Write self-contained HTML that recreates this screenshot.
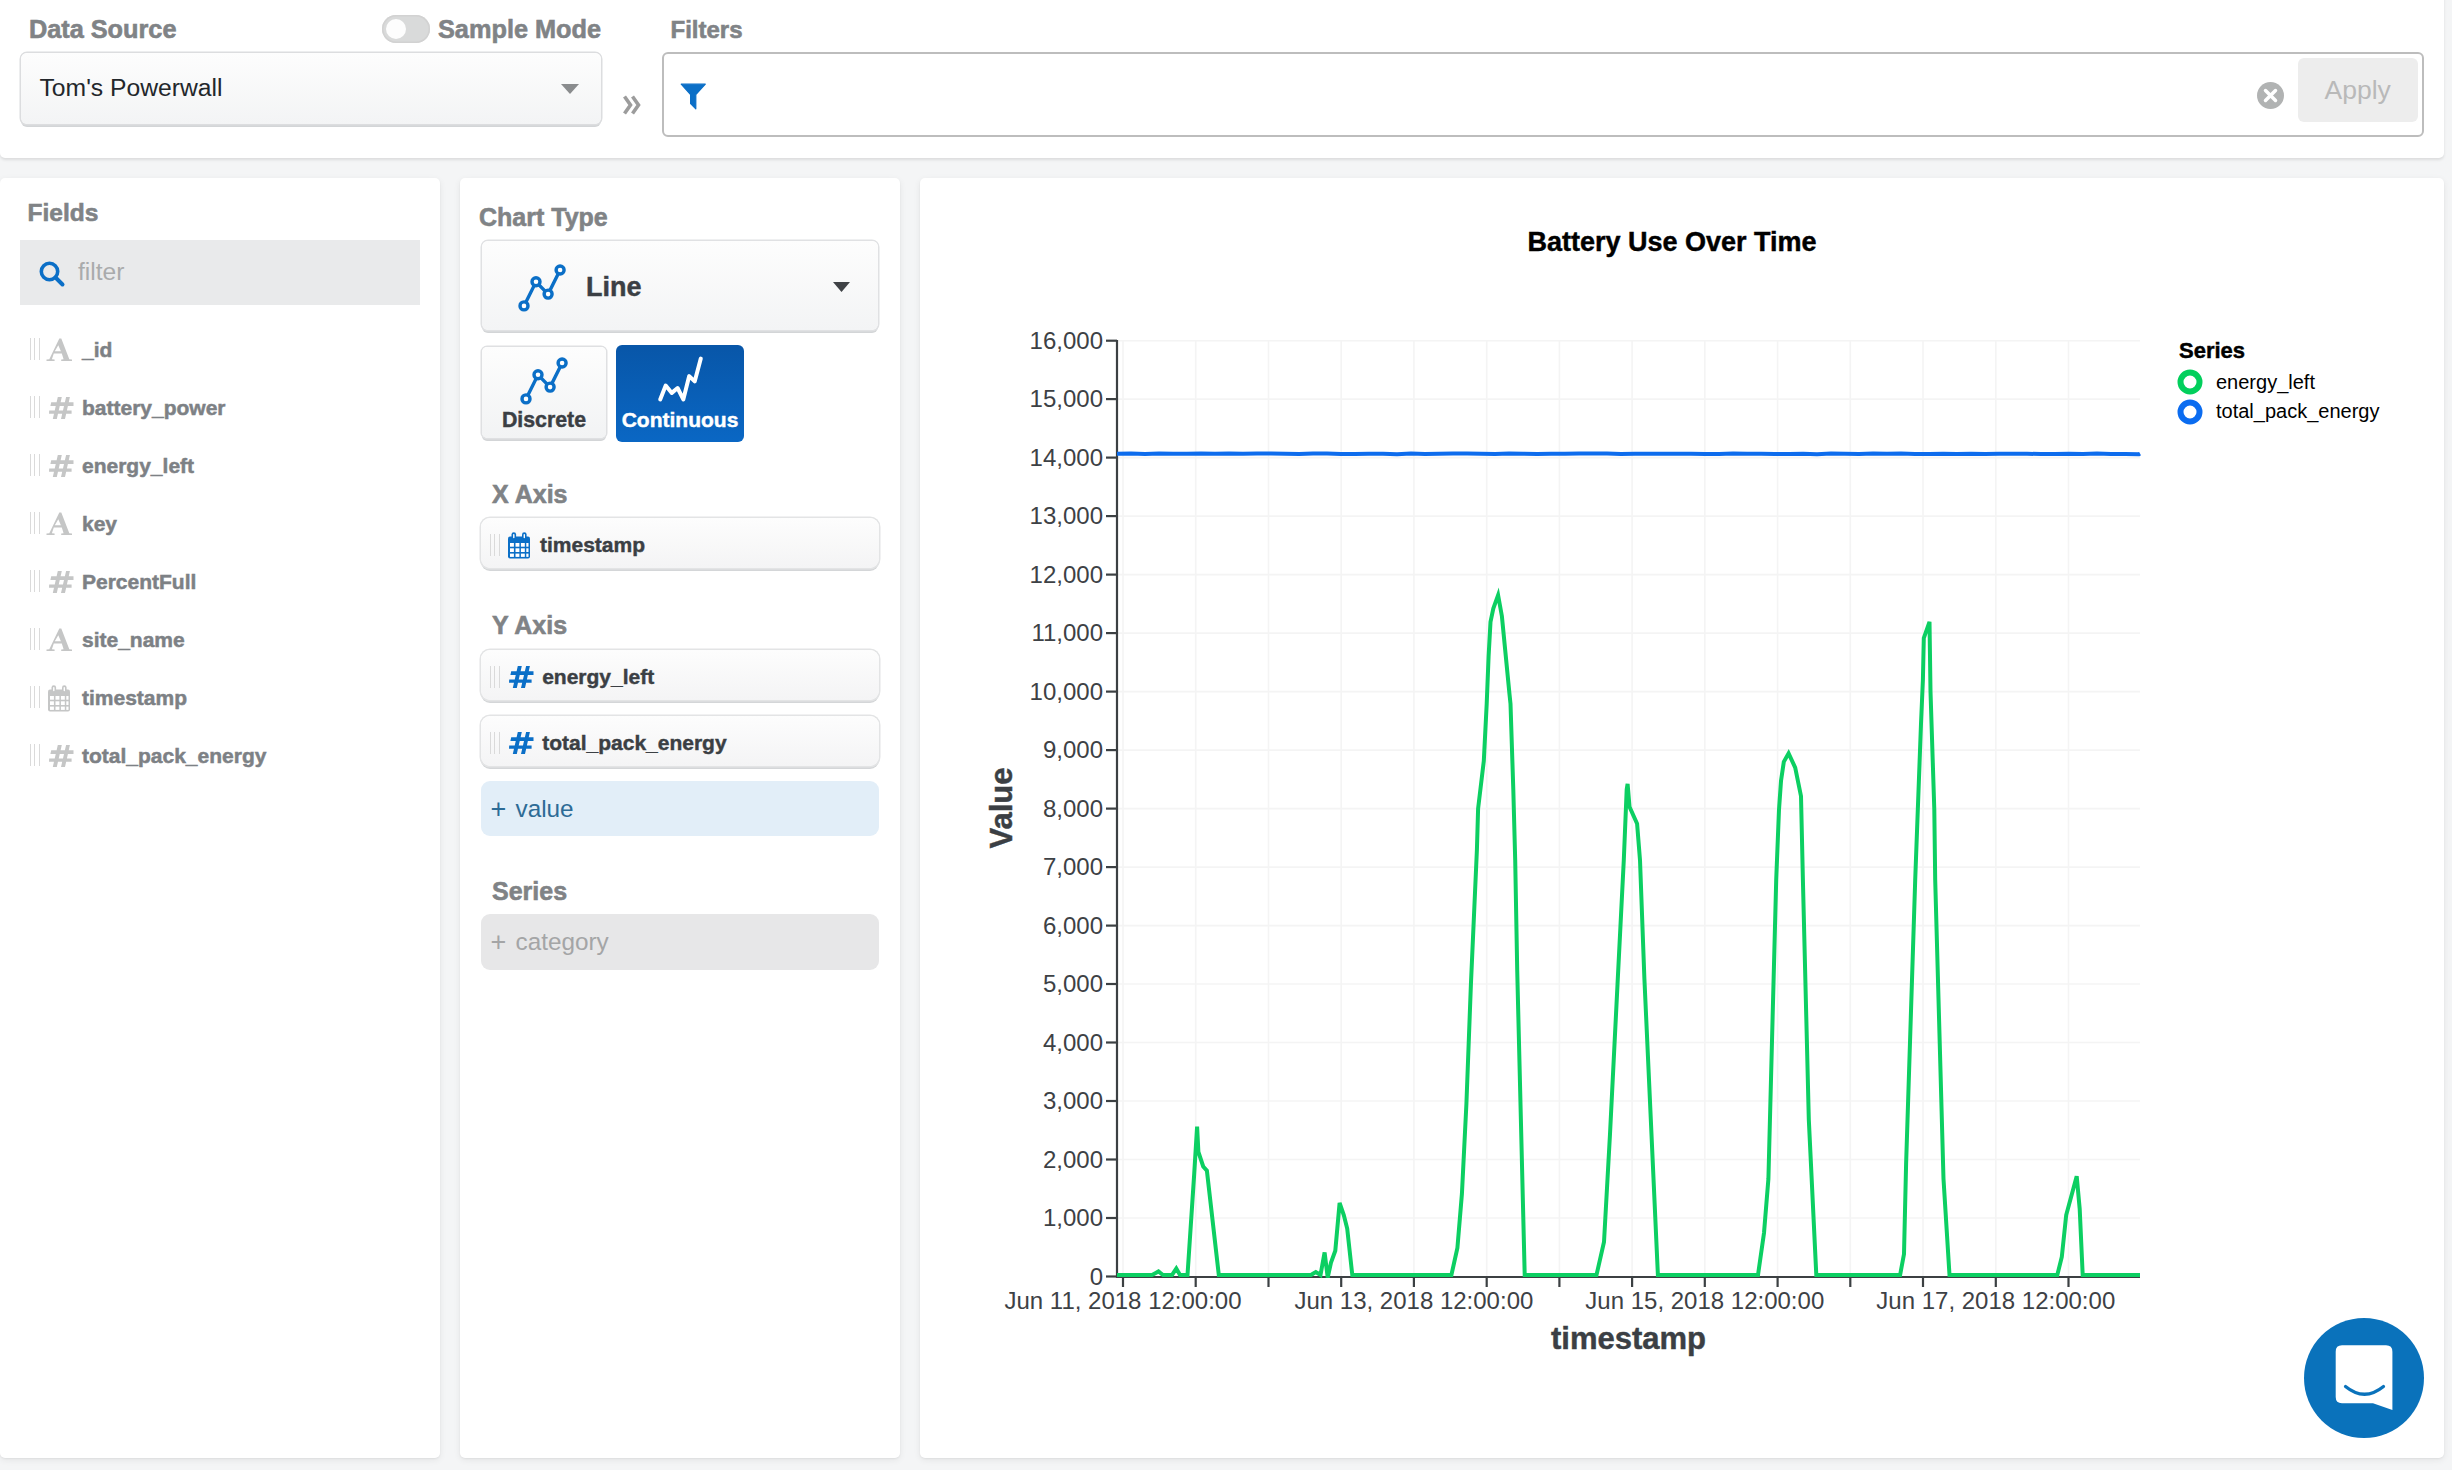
<!DOCTYPE html>
<html><head><meta charset="utf-8">
<style>
html,body{margin:0;padding:0;}
body{width:2452px;height:1470px;overflow:hidden;background:#f4f5f6;font-family:"Liberation Sans",sans-serif;position:relative;}
.a{position:absolute;}
.t{position:absolute;line-height:1;white-space:nowrap;}
.b{font-weight:bold;}
.sb{-webkit-text-stroke:0.45px currentColor;}
.panel{position:absolute;background:#fff;border-radius:5px;box-shadow:0 2px 7px rgba(0,0,0,0.07),0 1px 2px rgba(0,0,0,0.05);}
.lbl{color:#808386;font-weight:bold;font-size:25px;-webkit-text-stroke:0.6px #808386;}
.fld{color:#7d8185;font-weight:bold;font-size:21px;-webkit-text-stroke:0.5px #7d8185;}
.pill{position:absolute;left:481px;width:398px;border-radius:9px;background:linear-gradient(#fdfdfd,#f4f4f5);box-shadow:0 0 0 1.5px #e3e4e5, 0 3px 0 #d4d6d8;}
.hdl{position:absolute;width:10px;height:22px;border-left:1.5px solid #dadada;border-right:1.5px solid #dadada;box-sizing:border-box;}
.hdl:after{content:"";position:absolute;left:2.8px;top:0;width:1.5px;height:22px;background:#dadada;}
svg text{font-family:"Liberation Sans",sans-serif;}
.g{stroke:#f4f4f4;stroke-width:1.6;}
.ax{stroke:#3c4043;stroke-width:2.2;fill:none;}
.tk{stroke:#3c4043;stroke-width:2.2;}
.yl{font-size:24px;fill:#3d4145;text-anchor:end;}
.xl{font-size:24px;fill:#3d4145;text-anchor:middle;}
.bl{fill:none;stroke:#0d6ced;stroke-width:4;stroke-linejoin:round;}
.gl{fill:none;stroke:#0ccf62;stroke-width:4;stroke-linejoin:miter;stroke-miterlimit:4;}
</style></head>
<body>
<!-- header -->
<div class="panel" style="left:0px;top:-8px;width:2444px;height:166px;box-shadow:0 2px 3px rgba(0,0,0,0.1);"></div>
<div class="t lbl" style="left:28.9px;top:17.4px;font-size:25.3px;">Data Source</div>
<div class="a" style="left:382px;top:15px;width:48px;height:28px;border-radius:14px;background:#d9dada;box-shadow:inset 0 0 0 1.5px #d2d2d2;"></div>
<div class="a" style="left:386px;top:19px;width:20px;height:20px;border-radius:10px;background:#fdfdfd;"></div>
<div class="t lbl" style="left:438px;top:17.3px;font-size:25.3px;">Sample Mode</div>
<div class="t lbl" style="left:670.5px;top:18px;font-size:24px;">Filters</div>
<div class="a" style="left:21px;top:53px;width:580px;height:71px;border-radius:6px;background:linear-gradient(#fdfdfd,#f3f4f5);box-shadow:0 0 0 1.5px #dcdddf, 0 3px 0 #d3d5d7;"></div>
<div class="t" style="left:39.5px;top:75.8px;font-size:24.7px;color:#23272b;">Tom's Powerwall</div>
<svg class="a" style="left:558px;top:82px" width="24" height="14"><path d="M3,2 H21 L12,12 Z" fill="#8a8c8e"/></svg>
<svg class="a" style="left:621px;top:94px" width="22" height="22"><path d="M3.5,2.5 L9.5,11 L3.5,19.5 M11.5,2.5 L17.5,11 L11.5,19.5" stroke="#9c9c9c" stroke-width="3.6" fill="none"/></svg>
<div class="a" style="left:662px;top:52px;width:1758px;height:81px;border:2px solid #bdbdbd;border-radius:6px;background:#fff;"></div>
<svg class="a" style="left:679.5px;top:83px" width="28" height="28"><path d="M1.2,1.2 H25.3 L15.8,11.5 V25.8 L10.6,20.6 V11.5 Z" fill="#0b6fc7" stroke="#0b6fc7" stroke-width="1.2" stroke-linejoin="round"/></svg>
<svg class="a" style="left:2256px;top:81px" width="30" height="30"><circle cx="14.5" cy="14.5" r="13.5" fill="#b1b3b3"/><path d="M9.5,9.5 L19.5,19.5 M19.5,9.5 L9.5,19.5" stroke="#fff" stroke-width="3.5" stroke-linecap="round"/></svg>
<div class="a" style="left:2298px;top:58px;width:120px;height:64px;border-radius:6px;background:#ededed;"></div>
<div class="t" style="left:2324.5px;top:76.6px;font-size:26.5px;color:#b9b9b9;">Apply</div>

<!-- left panel -->
<div class="panel" style="left:0px;top:178px;width:440px;height:1280px;"></div>
<div class="t lbl" style="left:27.5px;top:200.7px;font-size:24.5px;">Fields</div>
<div class="a" style="left:20px;top:240px;width:400px;height:65px;background:#e9eaeb;"></div>
<svg class="a" style="left:38px;top:260px" width="28" height="28"><circle cx="11.5" cy="11.5" r="8.2" stroke="#0b6fc7" stroke-width="3.6" fill="none"/><path d="M17.5,17.5 L24.5,24.5" stroke="#0b6fc7" stroke-width="4" stroke-linecap="round"/></svg>
<div class="t" style="left:78px;top:260px;font-size:24.6px;color:#a9abac;">filter</div>
<div class="hdl" style="left:30px;top:338px;"></div>
<svg class="a" style="left:44px;top:336px" width="32" height="28"><path d="M15.3,2.4 L17.3,2.4 L25.3,23.3 L28.0,23.6 L28.0,25.0 L17.2,25.0 L17.2,23.6 L19.6,23.3 L17.8,17.6 L9.8,17.6 L7.9,23.3 L10.6,23.6 L10.6,25.0 L2.5,25.0 L2.5,23.6 L5.3,23.3 Z M14.3,9.2 L16.9,15.2 L10.8,15.2 Z" fill="#c5c6c6" fill-rule="evenodd"/></svg>
<div class="t fld" style="left:82px;top:339.2px;">_id</div>
<div class="hdl" style="left:30px;top:396px;"></div>
<svg class="a" style="left:48.5px;top:396.9px" width="25" height="22"><path d="M8.8,0 H12.8 L7.8,22 H3.8 Z M17.1,0 H20.9 L16,22 H12 Z M2.2,5.3 H24.5 V8.9 H1.4 Z M0.2,13.4 H22.6 V16.8 H0 Z" fill="#c5c6c6"/></svg>
<div class="t fld" style="left:82px;top:397.2px;">battery_power</div>
<div class="hdl" style="left:30px;top:454px;"></div>
<svg class="a" style="left:48.5px;top:454.9px" width="25" height="22"><path d="M8.8,0 H12.8 L7.8,22 H3.8 Z M17.1,0 H20.9 L16,22 H12 Z M2.2,5.3 H24.5 V8.9 H1.4 Z M0.2,13.4 H22.6 V16.8 H0 Z" fill="#c5c6c6"/></svg>
<div class="t fld" style="left:82px;top:455.2px;">energy_left</div>
<div class="hdl" style="left:30px;top:512px;"></div>
<svg class="a" style="left:44px;top:510px" width="32" height="28"><path d="M15.3,2.4 L17.3,2.4 L25.3,23.3 L28.0,23.6 L28.0,25.0 L17.2,25.0 L17.2,23.6 L19.6,23.3 L17.8,17.6 L9.8,17.6 L7.9,23.3 L10.6,23.6 L10.6,25.0 L2.5,25.0 L2.5,23.6 L5.3,23.3 Z M14.3,9.2 L16.9,15.2 L10.8,15.2 Z" fill="#c5c6c6" fill-rule="evenodd"/></svg>
<div class="t fld" style="left:82px;top:513.2px;">key</div>
<div class="hdl" style="left:30px;top:570px;"></div>
<svg class="a" style="left:48.5px;top:570.9px" width="25" height="22"><path d="M8.8,0 H12.8 L7.8,22 H3.8 Z M17.1,0 H20.9 L16,22 H12 Z M2.2,5.3 H24.5 V8.9 H1.4 Z M0.2,13.4 H22.6 V16.8 H0 Z" fill="#c5c6c6"/></svg>
<div class="t fld" style="left:82px;top:571.2px;">PercentFull</div>
<div class="hdl" style="left:30px;top:628px;"></div>
<svg class="a" style="left:44px;top:626px" width="32" height="28"><path d="M15.3,2.4 L17.3,2.4 L25.3,23.3 L28.0,23.6 L28.0,25.0 L17.2,25.0 L17.2,23.6 L19.6,23.3 L17.8,17.6 L9.8,17.6 L7.9,23.3 L10.6,23.6 L10.6,25.0 L2.5,25.0 L2.5,23.6 L5.3,23.3 Z M14.3,9.2 L16.9,15.2 L10.8,15.2 Z" fill="#c5c6c6" fill-rule="evenodd"/></svg>
<div class="t fld" style="left:82px;top:629.2px;">site_name</div>
<div class="hdl" style="left:30px;top:686px;"></div>
<svg class="a" style="left:47px;top:684.5px" width="26" height="28" viewBox="0 0 26 28"><path d="M1,6.5 Q1,4.5 3,4.5 H21 Q23,4.5 23,6.5 V24.5 Q23,26.5 21,26.5 H3 Q1,26.5 1,24.5 Z" fill="#c5c6c6"/><g fill="#fff"><rect x="3" y="11" width="3.9" height="3.7"/><rect x="8.5" y="11" width="3.9" height="3.7"/><rect x="13.9" y="11" width="3.9" height="3.7"/><rect x="19.3" y="11" width="2.2" height="3.7"/><rect x="3" y="16.3" width="3.9" height="3.7"/><rect x="8.5" y="16.3" width="3.9" height="3.7"/><rect x="13.9" y="16.3" width="3.9" height="3.7"/><rect x="19.3" y="16.3" width="2.2" height="3.7"/><rect x="3" y="21.6" width="3.9" height="3.3"/><rect x="8.5" y="21.6" width="3.9" height="3.3"/><rect x="13.9" y="21.6" width="3.9" height="3.3"/><rect x="19.3" y="21.6" width="2.2" height="3.3"/></g><g fill="#c5c6c6"><rect x="4.5" y="0.3" width="4.6" height="7" rx="2.3"/><rect x="15" y="0.3" width="4.6" height="7" rx="2.3"/></g><g fill="#fff"><rect x="6.1" y="2" width="1.4" height="4.3" rx="0.7"/><rect x="16.6" y="2" width="1.4" height="4.3" rx="0.7"/></g></svg>
<div class="t fld" style="left:82px;top:687.2px;">timestamp</div>
<div class="hdl" style="left:30px;top:744px;"></div>
<svg class="a" style="left:48.5px;top:744.9px" width="25" height="22"><path d="M8.8,0 H12.8 L7.8,22 H3.8 Z M17.1,0 H20.9 L16,22 H12 Z M2.2,5.3 H24.5 V8.9 H1.4 Z M0.2,13.4 H22.6 V16.8 H0 Z" fill="#c5c6c6"/></svg>
<div class="t fld" style="left:82px;top:745.2px;">total_pack_energy</div>

<!-- middle panel -->
<div class="panel" style="left:460px;top:178px;width:439.5px;height:1280px;"></div>
<div class="t lbl" style="left:479px;top:205.1px;">Chart Type</div>
<div class="a" style="left:482px;top:241px;width:396px;height:89px;border-radius:6px;background:linear-gradient(#fdfdfd,#f3f4f5);box-shadow:0 0 0 1.5px #e0e1e3, 0 3px 0 #d3d5d7;"></div>
<svg class="a" style="left:517.3px;top:262.5px" width="52" height="52"><g fill="none" stroke="#0b6fc7" stroke-width="3.4"><path d="M7,42.9 L19,18.8 L31.1,31.1 L43.1,7"/><circle cx="7" cy="42.9" r="4" fill="#fff"/><circle cx="19" cy="18.8" r="4" fill="#fff"/><circle cx="31.1" cy="31.1" r="4" fill="#fff"/><circle cx="43.1" cy="7" r="4" fill="#fff"/></g></svg>
<div class="t b sb" style="left:586px;top:273.8px;font-size:27px;color:#3b3f44;">Line</div>
<svg class="a" style="left:831px;top:280px" width="22" height="14"><path d="M2,2 H19 L10.5,12 Z" fill="#3f4246"/></svg>

<div class="a" style="left:482px;top:347px;width:124px;height:91px;border-radius:5px;background:linear-gradient(#fdfdfd,#f2f3f4);box-shadow:0 0 0 1.5px #dfe0e2, 0 3px 0 #d3d5d7;"></div>
<svg class="a" style="left:519.1px;top:356.1px" width="52" height="52"><g fill="none" stroke="#0b6fc7" stroke-width="3.4"><path d="M7,42.9 L19,18.8 L31.1,31.1 L43.1,7"/><circle cx="7" cy="42.9" r="4" fill="#fff"/><circle cx="19" cy="18.8" r="4" fill="#fff"/><circle cx="31.1" cy="31.1" r="4" fill="#fff"/><circle cx="43.1" cy="7" r="4" fill="#fff"/></g></svg>
<div class="t b sb" style="left:481px;width:126px;text-align:center;top:409.5px;font-size:21.3px;color:#3b3f44;">Discrete</div>
<div class="a" style="left:616px;top:345px;width:128px;height:97px;border-radius:6px;background:linear-gradient(#0856a8,#0a67c4);"></div>
<svg class="a" style="left:640px;top:350px" width="80" height="60"><path d="M20.2,49.4 L25.7,35.5 L31.8,42.9 L37.6,38 L43.3,49.4 L49.2,26.1 L54.7,31.4 L60.8,8.6" fill="none" stroke="#fff" stroke-width="4" stroke-linejoin="round" stroke-linecap="round"/></svg>
<div class="t b sb" style="left:616px;width:128px;text-align:center;top:408.5px;font-size:21px;color:#fff;">Continuous</div>

<div class="t lbl" style="left:492px;top:481.7px;">X Axis</div>
<div class="pill" style="top:518px;height:50px;"></div>
<div class="hdl" style="left:490px;top:534px;"></div>
<svg class="a" style="left:507px;top:531.5px" width="26" height="28" viewBox="0 0 26 28"><path d="M1,6.5 Q1,4.5 3,4.5 H21 Q23,4.5 23,6.5 V24.5 Q23,26.5 21,26.5 H3 Q1,26.5 1,24.5 Z" fill="#0b6fc7"/><g fill="#fff"><rect x="3" y="11" width="3.9" height="3.7"/><rect x="8.5" y="11" width="3.9" height="3.7"/><rect x="13.9" y="11" width="3.9" height="3.7"/><rect x="19.3" y="11" width="2.2" height="3.7"/><rect x="3" y="16.3" width="3.9" height="3.7"/><rect x="8.5" y="16.3" width="3.9" height="3.7"/><rect x="13.9" y="16.3" width="3.9" height="3.7"/><rect x="19.3" y="16.3" width="2.2" height="3.7"/><rect x="3" y="21.6" width="3.9" height="3.3"/><rect x="8.5" y="21.6" width="3.9" height="3.3"/><rect x="13.9" y="21.6" width="3.9" height="3.3"/><rect x="19.3" y="21.6" width="2.2" height="3.3"/></g><g fill="#0b6fc7"><rect x="4.5" y="0.3" width="4.6" height="7" rx="2.3"/><rect x="15" y="0.3" width="4.6" height="7" rx="2.3"/></g><g fill="#fff"><rect x="6.1" y="2" width="1.4" height="4.3" rx="0.7"/><rect x="16.6" y="2" width="1.4" height="4.3" rx="0.7"/></g></svg>
<div class="t b sb" style="left:540px;top:534px;font-size:21px;color:#3b3f44;">timestamp</div>

<div class="t lbl" style="left:492px;top:613.3px;">Y Axis</div>
<div class="pill" style="top:650px;height:50px;"></div>
<div class="hdl" style="left:490px;top:666px;"></div>
<svg class="a" style="left:508.5px;top:665.5px" width="25" height="22"><path d="M8.8,0 H12.8 L7.8,22 H3.8 Z M17.1,0 H20.9 L16,22 H12 Z M2.2,5.3 H24.5 V8.9 H1.4 Z M0.2,13.4 H22.6 V16.8 H0 Z" fill="#0b6fc7"/></svg>
<div class="t b sb" style="left:542.2px;top:666.1px;font-size:21px;color:#3b3f44;">energy_left</div>
<div class="pill" style="top:716px;height:50px;"></div>
<div class="hdl" style="left:490px;top:732px;"></div>
<svg class="a" style="left:508.5px;top:731.5px" width="25" height="22"><path d="M8.8,0 H12.8 L7.8,22 H3.8 Z M17.1,0 H20.9 L16,22 H12 Z M2.2,5.3 H24.5 V8.9 H1.4 Z M0.2,13.4 H22.6 V16.8 H0 Z" fill="#0b6fc7"/></svg>
<div class="t b sb" style="left:542.2px;top:732.3px;font-size:21px;color:#3b3f44;">total_pack_energy</div>

<div class="a" style="left:481px;top:781px;width:398px;height:55px;border-radius:9px;background:#e2eef8;"></div>
<div class="t" style="left:490.5px;top:795.5px;font-size:27px;color:#2d6b96;">+</div><div class="t" style="left:515.5px;top:797.3px;font-size:24.3px;color:#2d6b96;">value</div>
<div class="t lbl" style="left:492px;top:879px;">Series</div>
<div class="a" style="left:481px;top:914px;width:398px;height:56px;border-radius:9px;background:#e7e7e8;"></div>
<div class="t" style="left:490.5px;top:928.5px;font-size:27px;color:#a4a5a6;">+</div><div class="t" style="left:515.5px;top:930.1px;font-size:24.3px;color:#a4a5a6;">category</div>

<!-- chart panel -->
<div class="panel" style="left:920px;top:178px;width:1524px;height:1280px;"></div>
<div class="t b sb" style="left:1522px;width:300px;text-align:center;top:229.1px;font-size:27px;color:#000;">Battery Use Over Time</div>
<svg class="a" style="left:0;top:0" width="2452" height="1470">
<line x1="1123.0" y1="341" x2="1123.0" y2="1276" class="g"/>
<line x1="1195.7" y1="341" x2="1195.7" y2="1276" class="g"/>
<line x1="1268.5" y1="341" x2="1268.5" y2="1276" class="g"/>
<line x1="1341.2" y1="341" x2="1341.2" y2="1276" class="g"/>
<line x1="1413.9" y1="341" x2="1413.9" y2="1276" class="g"/>
<line x1="1486.7" y1="341" x2="1486.7" y2="1276" class="g"/>
<line x1="1559.4" y1="341" x2="1559.4" y2="1276" class="g"/>
<line x1="1632.1" y1="341" x2="1632.1" y2="1276" class="g"/>
<line x1="1704.8" y1="341" x2="1704.8" y2="1276" class="g"/>
<line x1="1777.6" y1="341" x2="1777.6" y2="1276" class="g"/>
<line x1="1850.3" y1="341" x2="1850.3" y2="1276" class="g"/>
<line x1="1923.0" y1="341" x2="1923.0" y2="1276" class="g"/>
<line x1="1995.8" y1="341" x2="1995.8" y2="1276" class="g"/>
<line x1="2068.5" y1="341" x2="2068.5" y2="1276" class="g"/>
<line x1="1118" y1="1218.0" x2="2140" y2="1218.0" class="g"/>
<line x1="1118" y1="1159.5" x2="2140" y2="1159.5" class="g"/>
<line x1="1118" y1="1101.0" x2="2140" y2="1101.0" class="g"/>
<line x1="1118" y1="1042.5" x2="2140" y2="1042.5" class="g"/>
<line x1="1118" y1="984.0" x2="2140" y2="984.0" class="g"/>
<line x1="1118" y1="925.6" x2="2140" y2="925.6" class="g"/>
<line x1="1118" y1="867.1" x2="2140" y2="867.1" class="g"/>
<line x1="1118" y1="808.6" x2="2140" y2="808.6" class="g"/>
<line x1="1118" y1="750.1" x2="2140" y2="750.1" class="g"/>
<line x1="1118" y1="691.6" x2="2140" y2="691.6" class="g"/>
<line x1="1118" y1="633.1" x2="2140" y2="633.1" class="g"/>
<line x1="1118" y1="574.6" x2="2140" y2="574.6" class="g"/>
<line x1="1118" y1="516.1" x2="2140" y2="516.1" class="g"/>
<line x1="1118" y1="457.6" x2="2140" y2="457.6" class="g"/>
<line x1="1118" y1="399.1" x2="2140" y2="399.1" class="g"/>
<line x1="1118" y1="340.7" x2="2140" y2="340.7" class="g"/>
<path d="M1117,340 V1277 H2140" class="ax"/>
<line x1="1106" y1="1276.5" x2="1117" y2="1276.5" class="tk"/>
<line x1="1106" y1="1218.0" x2="1117" y2="1218.0" class="tk"/>
<line x1="1106" y1="1159.5" x2="1117" y2="1159.5" class="tk"/>
<line x1="1106" y1="1101.0" x2="1117" y2="1101.0" class="tk"/>
<line x1="1106" y1="1042.5" x2="1117" y2="1042.5" class="tk"/>
<line x1="1106" y1="984.0" x2="1117" y2="984.0" class="tk"/>
<line x1="1106" y1="925.6" x2="1117" y2="925.6" class="tk"/>
<line x1="1106" y1="867.1" x2="1117" y2="867.1" class="tk"/>
<line x1="1106" y1="808.6" x2="1117" y2="808.6" class="tk"/>
<line x1="1106" y1="750.1" x2="1117" y2="750.1" class="tk"/>
<line x1="1106" y1="691.6" x2="1117" y2="691.6" class="tk"/>
<line x1="1106" y1="633.1" x2="1117" y2="633.1" class="tk"/>
<line x1="1106" y1="574.6" x2="1117" y2="574.6" class="tk"/>
<line x1="1106" y1="516.1" x2="1117" y2="516.1" class="tk"/>
<line x1="1106" y1="457.6" x2="1117" y2="457.6" class="tk"/>
<line x1="1106" y1="399.1" x2="1117" y2="399.1" class="tk"/>
<line x1="1106" y1="340.7" x2="1117" y2="340.7" class="tk"/>
<line x1="1123.0" y1="1277" x2="1123.0" y2="1287" class="tk"/>
<line x1="1195.7" y1="1277" x2="1195.7" y2="1287" class="tk"/>
<line x1="1268.5" y1="1277" x2="1268.5" y2="1287" class="tk"/>
<line x1="1341.2" y1="1277" x2="1341.2" y2="1287" class="tk"/>
<line x1="1413.9" y1="1277" x2="1413.9" y2="1287" class="tk"/>
<line x1="1486.7" y1="1277" x2="1486.7" y2="1287" class="tk"/>
<line x1="1559.4" y1="1277" x2="1559.4" y2="1287" class="tk"/>
<line x1="1632.1" y1="1277" x2="1632.1" y2="1287" class="tk"/>
<line x1="1704.8" y1="1277" x2="1704.8" y2="1287" class="tk"/>
<line x1="1777.6" y1="1277" x2="1777.6" y2="1287" class="tk"/>
<line x1="1850.3" y1="1277" x2="1850.3" y2="1287" class="tk"/>
<line x1="1923.0" y1="1277" x2="1923.0" y2="1287" class="tk"/>
<line x1="1995.8" y1="1277" x2="1995.8" y2="1287" class="tk"/>
<line x1="2068.5" y1="1277" x2="2068.5" y2="1287" class="tk"/>
<text x="1103" y="1284.8" class="yl">0</text>
<text x="1103" y="1226.3" class="yl">1,000</text>
<text x="1103" y="1167.8" class="yl">2,000</text>
<text x="1103" y="1109.3" class="yl">3,000</text>
<text x="1103" y="1050.8" class="yl">4,000</text>
<text x="1103" y="992.3" class="yl">5,000</text>
<text x="1103" y="933.9" class="yl">6,000</text>
<text x="1103" y="875.4" class="yl">7,000</text>
<text x="1103" y="816.9" class="yl">8,000</text>
<text x="1103" y="758.4" class="yl">9,000</text>
<text x="1103" y="699.9" class="yl">10,000</text>
<text x="1103" y="641.4" class="yl">11,000</text>
<text x="1103" y="582.9" class="yl">12,000</text>
<text x="1103" y="524.4" class="yl">13,000</text>
<text x="1103" y="465.9" class="yl">14,000</text>
<text x="1103" y="407.4" class="yl">15,000</text>
<text x="1103" y="349.0" class="yl">16,000</text>
<text x="1123.0" y="1309" class="xl">Jun 11, 2018 12:00:00</text>
<text x="1413.9" y="1309" class="xl">Jun 13, 2018 12:00:00</text>
<text x="1704.8" y="1309" class="xl">Jun 15, 2018 12:00:00</text>
<text x="1995.8" y="1309" class="xl">Jun 17, 2018 12:00:00</text>
<polyline class="bl" points="1117.0,453.68 1131.0,453.56 1145.0,453.91 1159.0,453.50 1173.0,453.83 1187.0,453.71 1201.0,453.49 1215.0,453.81 1229.0,453.48 1243.0,453.75 1257.0,453.50 1271.0,453.51 1285.0,453.75 1299.0,454.03 1313.0,453.54 1327.0,453.61 1341.0,453.89 1355.0,454.11 1369.0,453.85 1383.0,453.73 1397.0,454.13 1411.0,453.48 1425.0,454.05 1439.0,453.65 1453.0,453.55 1467.0,453.53 1481.0,453.67 1495.0,454.02 1509.0,453.58 1523.0,453.86 1537.0,453.90 1551.0,453.71 1565.0,453.83 1579.0,453.49 1593.0,453.49 1607.0,453.59 1621.0,453.93 1635.0,453.75 1649.0,453.67 1663.0,453.86 1677.0,453.77 1691.0,453.66 1705.0,454.01 1719.0,453.94 1733.0,453.62 1747.0,453.85 1761.0,453.82 1775.0,454.06 1789.0,453.96 1803.0,453.65 1817.0,454.14 1831.0,453.53 1845.0,453.74 1859.0,453.98 1873.0,453.56 1887.0,453.79 1901.0,453.48 1915.0,453.92 1929.0,453.99 1943.0,453.85 1957.0,454.06 1971.0,453.67 1985.0,453.94 1999.0,453.87 2013.0,453.86 2027.0,453.77 2041.0,454.04 2055.0,454.11 2069.0,453.78 2083.0,453.91 2097.0,453.49 2111.0,453.94 2125.0,453.90 2139.0,454.15 2140.0,453.60"/>
<polyline class="gl" points="1117,1275 1152,1275 1158.5,1271.5 1163,1275 1172,1275 1176.3,1268.5 1180,1275 1187.5,1275 1194.2,1174 1197.1,1126.5 1198.4,1152 1203.2,1166.5 1206.9,1170.7 1218.8,1275 1311,1275 1315.8,1272 1320.5,1275 1324.6,1252.4 1327.7,1277.5 1331,1262.6 1335.3,1250.7 1339.6,1203 1343.8,1215 1347.2,1228.6 1352.3,1275 1451.4,1275 1457.4,1248 1461.9,1194 1466.4,1104 1470.9,984.6 1476.9,850 1478.1,808.6 1483.8,761 1486.7,703.8 1488.6,656.2 1490.5,621.9 1493.3,608.6 1498.1,595.2 1501.9,616.2 1509.5,694.3 1510.5,703.8 1513.3,789.5 1515.2,860 1517.2,969.7 1524.7,1275 1596.5,1275 1604,1242 1610,1134 1617.5,984.6 1623.8,860 1626.7,789.5 1627.6,783.8 1629.5,806.7 1637.1,823.8 1640,860 1644.4,978.7 1657.9,1275 1758,1275 1764,1233 1768.4,1179 1776.2,880 1779,809.5 1781,781 1783.8,761.9 1788.6,753.3 1795.2,767.6 1801,796.2 1802.9,880 1808.8,1119.4 1816.3,1275 1900.1,1275 1904,1254 1906.1,1164 1915.2,880 1921,723.8 1922.9,680 1923.8,638 1929.5,621.9 1930.5,691.4 1934.3,809.5 1935.2,880 1943.5,1179 1949.5,1275 2057.3,1275 2061.8,1257 2066.2,1215 2076.7,1176.2 2079.7,1209 2082.7,1275 2140,1275"/>
</svg>
<div class="t b sb" style="left:1551px;width:155px;text-align:center;top:1322.8px;font-size:31px;color:#3b3f44;">timestamp</div>
<div class="t b sb" style="left:961px;top:793px;width:80px;text-align:center;font-size:31px;color:#3b3f44;transform:rotate(-90deg);">Value</div>
<div class="t b sb" style="left:2179px;top:339.5px;font-size:22px;color:#000;">Series</div>
<svg class="a" style="left:2174px;top:366px" width="32" height="62"><circle cx="16" cy="16" r="9.5" stroke="#02cf5c" stroke-width="6" fill="#fff"/><circle cx="16" cy="46" r="9.5" stroke="#0b6cf0" stroke-width="6" fill="#fff"/></svg>
<div class="t" style="left:2216px;top:371.6px;font-size:20px;color:#000;">energy_left</div>
<div class="t" style="left:2216px;top:401px;font-size:20px;color:#000;">total_pack_energy</div>

<!-- chat -->
<div class="a" style="left:2304px;top:1318px;width:120px;height:120px;border-radius:60px;background:#0a72bb;"></div>
<svg class="a" style="left:2304px;top:1318px" width="120" height="120"><path d="M38,27.3 H82 Q88.4,27.3 88.4,33.7 V92 L69,85.2 H38 Q31.7,85.2 31.7,79 V33.7 Q31.7,27.3 38,27.3 Z" fill="#fff"/><path d="M41.5,68.5 Q60.5,84 79.5,68.5" stroke="#0a72bb" stroke-width="3.2" fill="none" stroke-linecap="round"/></svg>
</body></html>
